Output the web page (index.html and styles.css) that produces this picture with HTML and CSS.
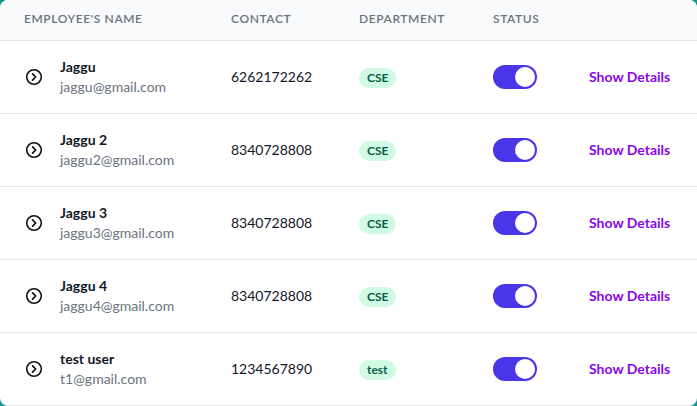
FILE: index.html
```html
<!DOCTYPE html>
<html>
<head>
<meta charset="utf-8">
<link rel="stylesheet" href="styles.css">
</head>
<body>
<div class="card">
  <div class="row head">
    <div class="cell">Employee's Name</div>
    <div class="cell">Contact</div>
    <div class="cell">Department</div>
    <div class="cell">Status</div>
    <div class="cell"></div>
  </div>

  <div class="row">
    <div class="cell namecell">
      <svg class="chev" viewBox="0 0 20 20" width="20" height="20"><circle cx="10" cy="10" r="7.3" fill="none" stroke="#111" stroke-width="1.6"/><path d="M8.6 6.9 L11.6 10 L8.6 13.1" fill="none" stroke="#111" stroke-width="1.7" stroke-linecap="round" stroke-linejoin="round"/></svg>
      <div><div class="name">Jaggu</div><div class="email">jaggu@gmail.com</div></div>
    </div>
    <div class="cell contact">6262172262</div>
    <div class="cell"><span class="badge">CSE</span></div>
    <div class="cell"><span class="toggle"><span class="knob"></span></span></div>
    <div class="cell"><a class="link">Show Details</a></div>
  </div>

  <div class="row">
    <div class="cell namecell">
      <svg class="chev" viewBox="0 0 20 20" width="20" height="20"><circle cx="10" cy="10" r="7.3" fill="none" stroke="#111" stroke-width="1.6"/><path d="M8.6 6.9 L11.6 10 L8.6 13.1" fill="none" stroke="#111" stroke-width="1.7" stroke-linecap="round" stroke-linejoin="round"/></svg>
      <div><div class="name">Jaggu 2</div><div class="email">jaggu2@gmail.com</div></div>
    </div>
    <div class="cell contact">8340728808</div>
    <div class="cell"><span class="badge">CSE</span></div>
    <div class="cell"><span class="toggle"><span class="knob"></span></span></div>
    <div class="cell"><a class="link">Show Details</a></div>
  </div>

  <div class="row">
    <div class="cell namecell">
      <svg class="chev" viewBox="0 0 20 20" width="20" height="20"><circle cx="10" cy="10" r="7.3" fill="none" stroke="#111" stroke-width="1.6"/><path d="M8.6 6.9 L11.6 10 L8.6 13.1" fill="none" stroke="#111" stroke-width="1.7" stroke-linecap="round" stroke-linejoin="round"/></svg>
      <div><div class="name">Jaggu 3</div><div class="email">jaggu3@gmail.com</div></div>
    </div>
    <div class="cell contact">8340728808</div>
    <div class="cell"><span class="badge">CSE</span></div>
    <div class="cell"><span class="toggle"><span class="knob"></span></span></div>
    <div class="cell"><a class="link">Show Details</a></div>
  </div>

  <div class="row">
    <div class="cell namecell">
      <svg class="chev" viewBox="0 0 20 20" width="20" height="20"><circle cx="10" cy="10" r="7.3" fill="none" stroke="#111" stroke-width="1.6"/><path d="M8.6 6.9 L11.6 10 L8.6 13.1" fill="none" stroke="#111" stroke-width="1.7" stroke-linecap="round" stroke-linejoin="round"/></svg>
      <div><div class="name">Jaggu 4</div><div class="email">jaggu4@gmail.com</div></div>
    </div>
    <div class="cell contact">8340728808</div>
    <div class="cell"><span class="badge">CSE</span></div>
    <div class="cell"><span class="toggle"><span class="knob"></span></span></div>
    <div class="cell"><a class="link">Show Details</a></div>
  </div>

  <div class="row last">
    <div class="cell namecell">
      <svg class="chev" viewBox="0 0 20 20" width="20" height="20"><circle cx="10" cy="10" r="7.3" fill="none" stroke="#111" stroke-width="1.6"/><path d="M8.6 6.9 L11.6 10 L8.6 13.1" fill="none" stroke="#111" stroke-width="1.7" stroke-linecap="round" stroke-linejoin="round"/></svg>
      <div><div class="name">test user</div><div class="email">t1@gmail.com</div></div>
    </div>
    <div class="cell contact">1234567890</div>
    <div class="cell"><span class="badge">test</span></div>
    <div class="cell"><span class="toggle"><span class="knob"></span></span></div>
    <div class="cell"><a class="link">Show Details</a></div>
  </div>
</div>
</body>
</html>
```

FILE: styles.css
```css
html, body {
  margin: 0;
  padding: 0;
  background: #0f968c;
  width: 697px;
  height: 406px;
  overflow: hidden;
}
body {
  font-family: "Lato", "Noto Sans", sans-serif;
  color: #111827;
}
.card {
  background: #fff;
  border-radius: 8px;
  overflow: hidden;
  height: 406px;
  box-sizing: border-box;
  border-bottom: 1px solid #e5e7eb;
}
.row {
  display: grid;
  grid-template-columns: 207px 128px 134px 96px 132px;
  align-items: center;
  height: 73px;
  border-bottom: 1px solid #e5e7eb;
  box-sizing: border-box;
}
.row.last {
  height: 72px;
  border-bottom: none;
}
.row.head {
  height: 41px;
  background: #f9fafb;
  padding-bottom: 2px;
}
.head .cell {
  font-size: 12px;
  font-weight: 600;
  text-transform: uppercase;
  letter-spacing: 0.05em;
  color: #6b7280;
  line-height: 16px;
}
.cell {
  padding: 0 24px;
  font-size: 14px;
  line-height: 20px;
  white-space: nowrap;
}
.namecell {
  display: flex;
  align-items: center;
  gap: 16px;
}
.chev {
  display: block;
  flex: none;
}
.name {
  font-weight: 700;
  color: #111827;
}
.email {
  color: #6b7280;
}
.contact {
  color: #111827;
}
.badge {
  display: inline-block;
  background: #d1fae5;
  color: #065f46;
  font-size: 12px;
  font-weight: 700;
  line-height: 20px;
  padding: 0 8px;
  border-radius: 9999px;
}
.toggle {
  display: flex;
  justify-content: flex-end;
  align-items: center;
  width: 44px;
  height: 24px;
  border-radius: 12px;
  background: #4a35e8;
  box-sizing: border-box;
  padding: 2px;
}
.knob {
  width: 20px;
  height: 20px;
  border-radius: 50%;
  background: #fff;
}
.link {
  color: #8a06e8;
  font-weight: 700;
  text-decoration: none;
}
```
